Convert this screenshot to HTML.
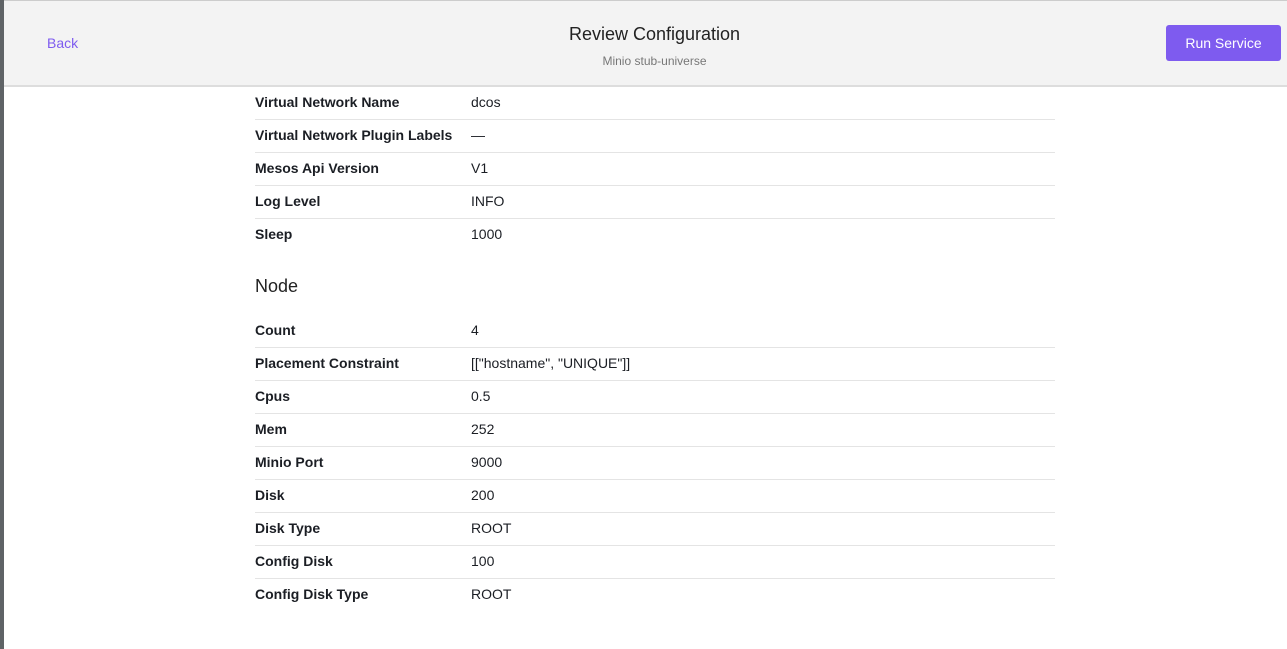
<!DOCTYPE html>
<html><head><style>
*{margin:0;padding:0;box-sizing:border-box}
body{width:1287px;height:649px;overflow:hidden;background:#fff;font-family:"Liberation Sans",sans-serif;position:relative}
.strip{position:absolute;left:0;top:0;width:4px;height:649px;background:#5f6366}
.hdr{position:absolute;left:4px;top:0;width:1283px;height:87px;background:#f3f3f3;border-top:1px solid #ccc;border-bottom:2px solid #ddd}
.back{position:absolute;left:43px;top:34px;color:#7e5bef;font-size:14px}
.title{position:absolute;left:9px;width:100%;top:23px;text-align:center;font-size:18px;color:#222}
.sub{position:absolute;left:9px;width:100%;top:53px;text-align:center;font-size:12px;color:#777}
.btn{position:absolute;left:1162px;top:24px;width:115px;height:36px;background:#7e5bef;border-radius:3px;color:#fff;font-size:14px;text-align:center;line-height:36px}
.tbl{position:absolute;left:255px;width:800px}
.row{height:32px;border-bottom:1px solid #e4e4e4;font-size:14px;color:#1b1e24;position:relative;box-sizing:content-box}
.row:last-child{border-bottom:none}
.row b{position:absolute;left:0;top:7px}
.row span{position:absolute;left:216px;top:7px}
h3{position:absolute;left:255px;top:276px;font-weight:normal;font-size:18px;color:#222}
</style></head><body>
<div class="strip"></div>
<div class="hdr"><div class="back">Back</div><div class="title">Review Configuration</div><div class="sub">Minio stub-universe</div><div class="btn">Run Service</div></div>
<div class="tbl" style="top:87px">
<div class="row"><b>Virtual Network Name</b><span>dcos</span></div>
<div class="row"><b>Virtual Network Plugin Labels</b><span>—</span></div>
<div class="row"><b>Mesos Api Version</b><span>V1</span></div>
<div class="row"><b>Log Level</b><span>INFO</span></div>
<div class="row"><b>Sleep</b><span>1000</span></div>
</div>
<h3>Node</h3>
<div class="tbl" style="top:315px">
<div class="row"><b>Count</b><span>4</span></div>
<div class="row"><b>Placement Constraint</b><span>[["hostname", "UNIQUE"]]</span></div>
<div class="row"><b>Cpus</b><span>0.5</span></div>
<div class="row"><b>Mem</b><span>252</span></div>
<div class="row"><b>Minio Port</b><span>9000</span></div>
<div class="row"><b>Disk</b><span>200</span></div>
<div class="row"><b>Disk Type</b><span>ROOT</span></div>
<div class="row"><b>Config Disk</b><span>100</span></div>
<div class="row"><b>Config Disk Type</b><span>ROOT</span></div>
</div>
</body></html>
